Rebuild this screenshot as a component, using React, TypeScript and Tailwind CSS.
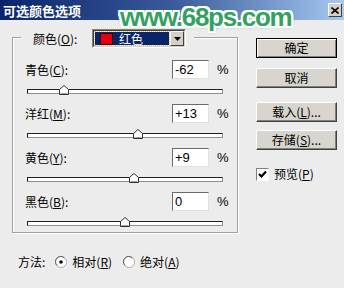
import type { CSSProperties } from 'react';

const cjk = "font-['Noto_Sans_CJK_SC','Liberation_Sans',sans-serif]";

function Thumb({ left }: { left: number }) {
  return (
    <svg
      className="absolute top-0"
      style={{ left } as CSSProperties}
      width="10"
      height="10"
      viewBox="0 0 10 10"
    >
      <polygon points="0.5,9.5 0.5,4.5 5,0.5 9.5,4.5 9.5,9.5" fill="#ffffff" stroke="#303030" strokeWidth="1" />
      <line x1="1.5" y1="8.5" x2="8.5" y2="8.5" stroke="#a0a0a0" />
    </svg>
  );
}

function Slider({ pos }: { pos: number }) {
  return (
    <div className="relative mt-[6px] ml-[14px] h-[10px] w-[196px]">
      <div className="absolute left-0 right-0 top-[4px] h-[5px] border border-t-[#202020] border-l-[#202020] border-b-[#909090] border-r-[#909090] bg-white" />
      <Thumb left={pos} />
    </div>
  );
}

function NumInput({ value }: { value: string }) {
  return (
    <div className="flex h-[19px] w-[37px] items-center border border-t-[#6a6a6a] border-l-[#6a6a6a] border-b-[#e0e0e0] border-r-[#e0e0e0] bg-white pl-[2px] font-['Liberation_Sans',sans-serif] text-[13px] leading-none">
      {value}
    </div>
  );
}

function ColorRow({ name, k, value, pos, first }: { name: string; k: string; value: string; pos: number; first?: boolean }) {
  return (
    <div className={first ? '' : 'mt-[9px]'}>
      <div className="flex h-[19px] items-center">
        <span className="ml-[12px] w-[147px]">
          {name}(<span className="underline">{k}</span>):
        </span>
        <NumInput value={value} />
        <span className="ml-[8px] font-['Liberation_Sans',sans-serif] text-[13px]">%</span>
      </div>
      <Slider pos={pos} />
    </div>
  );
}

function Btn({ children, primary, className = '' }: { children: React.ReactNode; primary?: boolean; className?: string }) {
  return (
    <div
      className={`flex h-[20px] w-[81px] items-center justify-center bg-[#d8d5cf] ${
        primary
          ? 'border border-black shadow-[inset_1px_1px_0_#ffffff,inset_-1px_-1px_0_#808080]'
          : 'border border-t-white border-l-white border-b-[#404040] border-r-[#404040] shadow-[inset_-1px_-1px_0_#808080]'
      } ${className}`}
    >
      {children}
    </div>
  );
}

function Radio({ checked }: { checked?: boolean }) {
  return (
    <svg width="12" height="12" viewBox="0 0 12 12">
      <circle cx="6" cy="6" r="5.5" fill="#ffffff" stroke="#b0b0b0" />
      <path d="M2 9.5 A5 5 0 0 1 9.5 2" fill="none" stroke="#606060" />
      {checked && <circle cx="6" cy="6" r="1.8" fill="#000000" />}
    </svg>
  );
}

export default function App() {
  return (
    <div className={`relative h-[288px] w-[344px] overflow-hidden bg-[#ececec] text-[12px] text-black ${cjk}`}>
      {/* Title bar */}
      <div className="flex h-[20px] items-center justify-between bg-linear-to-r from-[#0a246a] via-[#3a5a9a] to-[#a6caf0] pl-[3px] pr-[2px]">
        <span className="text-[13px] font-bold leading-none text-white">可选颜色选项</span>
        <div className="flex h-[14px] w-[14px] items-center justify-center border border-t-white border-l-white border-b-[#404040] border-r-[#404040] bg-[#d4d0c8]">
          <svg width="8" height="7" viewBox="0 0 8 7">
            <path d="M0.5 0.5 L7.5 6.5 M7.5 0.5 L0.5 6.5" stroke="#000" strokeWidth="1.6" />
          </svg>
        </div>
      </div>

      <div className="flex">
        <div className="ml-[12px] mt-[17px] w-[226px]">
          {/* group box */}
          <div className="relative h-[196px] border border-[#a0a0a0] pt-[22px] shadow-[1px_1px_0_#ffffff,inset_1px_1px_0_#ffffff]">
            <div className="absolute left-[8px] top-[-9px] flex h-[19px] items-center bg-[#ececec] pl-[12px] pr-[8px]">
              <span className="w-[59px]">
                颜色(<span className="underline">O</span>):
              </span>
              <div className="flex h-[19px] w-[94px] border border-t-[#808080] border-l-[#808080] border-b-white border-r-white">
                <div className="flex flex-1 border border-t-[#404040] border-l-[#404040] border-b-[#d4d0c8] border-r-[#d4d0c8] bg-white">
                  <div className="m-[1px] flex flex-1 items-center bg-[#0a246a] outline outline-1 outline-dotted outline-[#e0c060]">
                    <div className="ml-[5px] h-[12px] w-[13px] border border-[#400000] bg-[#e00010]" />
                    <span className="ml-[6px] leading-none text-white">红色</span>
                  </div>
                  <div className="flex w-[14px] items-center justify-center border border-t-white border-l-white border-b-[#404040] border-r-[#404040] bg-[#d4d0c8]">
                    <svg width="7" height="4" viewBox="0 0 7 4">
                      <path d="M0 0 H7 L3.5 4 Z" fill="#000" />
                    </svg>
                  </div>
                </div>
              </div>
            </div>

            <ColorRow first name="青色" k="C" value="-62" pos={32} />
            <ColorRow name="洋红" k="M" value="+13" pos={106} />
            <ColorRow name="黄色" k="Y" value="+9" pos={102} />
            <ColorRow name="黑色" k="B" value="0" pos={93} />
          </div>

          {/* method */}
          <div className="ml-[6px] mt-[22px] flex h-[14px] items-center">
            <span>方法:</span>
            <span className="ml-[10px] flex">
              <Radio checked />
            </span>
            <span className="ml-[5px]">
              相对(<span className="underline">R</span>)
            </span>
            <span className="ml-[11px] flex">
              <Radio />
            </span>
            <span className="ml-[5px]">
              绝对(<span className="underline">A</span>)
            </span>
          </div>
        </div>

        {/* buttons */}
        <div className="ml-[18px] mt-[18px] flex flex-col">
          <Btn primary>确定</Btn>
          <Btn className="mt-[10px]">取消</Btn>
          <Btn className="mt-[14px]">
            载入(<span className="underline">L</span>)...
          </Btn>
          <Btn className="mt-[8px]">
            存储(<span className="underline">S</span>)...
          </Btn>
          <div className="mt-[15px] flex items-center">
            <div className="flex h-[13px] w-[13px] items-center justify-center border border-t-[#808080] border-l-[#808080] border-b-white border-r-white bg-white">
              <svg width="9" height="9" viewBox="0 0 9 9">
                <path d="M1 4 L3.5 6.5 L8 1.5" fill="none" stroke="#000" strokeWidth="2.2" />
              </svg>
            </div>
            <span className="ml-[5px]">
              预览(<span className="underline">P</span>)
            </span>
          </div>
        </div>
      </div>

      {/* watermark */}
      <div className="absolute left-[120px] top-[4px] font-['Liberation_Sans',sans-serif] text-[26px] font-bold leading-none tracking-[-1.3px] text-[#34a062] [text-shadow:2px_0_0_#fff,-2px_0_0_#fff,0_2px_0_#fff,0_-2px_0_#fff,2px_2px_0_#fff,-2px_-2px_0_#fff,2px_-2px_0_#fff,-2px_2px_0_#fff,0_0_4px_#34a062]">
        www.68ps.com
      </div>
    </div>
  );
}
